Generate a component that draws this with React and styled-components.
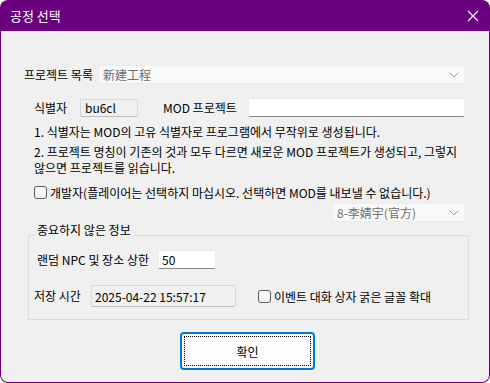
import React from "react";
import styled, { createGlobalStyle } from "styled-components";

const Global = createGlobalStyle`
  html, body { margin: 0; padding: 0; background: #ffffff; }
  body { font-family: "Noto Sans CJK KR", "Noto Sans", sans-serif; font-size: 12px; color: #000; }
  * { box-sizing: border-box; }
`;

const Window = styled.div`
  width: 490px;
  height: 383px;
  background: #6a0080;
  border-radius: 8px;
  display: flex;
  flex-direction: column;
  overflow: hidden;
`;

const TitleBar = styled.div`
  height: 31px;
  flex: 0 0 31px;
  display: flex;
  align-items: center;
  justify-content: space-between;
  padding: 0 10px 0 10px;
  color: #fff;
  font-size: 13px;
`;

const CloseBtn = styled.div`
  width: 12px;
  height: 12px;
  display: flex;
  margin-right: 1px;
`;

const Body = styled.div`
  flex: 1;
  margin: 0 1px 1px 1px;
  background: #f0f0f0;
  border-radius: 0 0 7px 7px;
  display: flex;
  flex-direction: column;
  align-items: flex-start;
`;

const Row = styled.div`
  display: flex;
  align-items: center;
  height: ${(p) => p.$h || 19}px;
  margin-top: ${(p) => p.$top || 0}px;
  padding-left: ${(p) => p.$left || 0}px;
  align-self: ${(p) => (p.$right ? "flex-end" : "auto")};
  padding-right: ${(p) => p.$pr || 0}px;
`;

const Label = styled.span`
  width: ${(p) => (p.$w ? `${p.$w}px` : "auto")};
  margin-left: ${(p) => p.$ml || 0}px;
  white-space: nowrap;
  line-height: 16px;
`;

const Select = styled.div`
  width: ${(p) => p.$w}px;
  height: 19px;
  background: #f9f9f9;
  border: 1px solid #ececec;
  border-radius: 2px;
  display: flex;
  align-items: center;
  justify-content: space-between;
  padding: 0 5px 0 4px;
  color: #6d6d6d;
  font-size: 12px;
`;

const TextBox = styled.div`
  width: ${(p) => p.$w}px;
  height: ${(p) => p.$h || 19}px;
  background: ${(p) => (p.$ro ? "#f0f0f0" : "#ffffff")};
  border: 1px solid ${(p) => (p.$ro ? "#d9d9d9" : "#ececec")};
  border-bottom-color: ${(p) => (p.$ro ? "#bdbdbd" : "#8a8a8a")};
  border-radius: 2px;
  display: flex;
  align-items: center;
  padding-left: ${(p) => p.$pl || 4}px;
  color: #000;
  white-space: nowrap;
`;

const Note = styled.div`
  margin-top: ${(p) => p.$top || 0}px;
  padding-left: 33px;
  line-height: 16px;
  white-space: nowrap;
`;

const CheckRow = styled.label`
  display: flex;
  align-items: center;
  gap: 3px;
  margin-top: ${(p) => p.$top || 0}px;
  margin-left: ${(p) => p.$ml || 0}px;
  padding-left: ${(p) => p.$left || 0}px;
  height: 16px;
  white-space: nowrap;
`;

const Box = styled.span`
  width: 13px;
  height: 13px;
  border: 1px solid #5a5a5a;
  border-radius: 3px;
  background: #f7f7f7;
  flex: 0 0 13px;
`;

const Group = styled.fieldset`
  margin: 0 0 0 27px;
  width: 441px;
  border: 1px solid #dcdcdc;
  padding: 0 0 12px 5px;
  display: flex;
  flex-direction: column;
  align-items: flex-start;
  min-inline-size: 0;
`;

const Legend = styled.legend`
  padding: 0 3px 10px 3px;
  line-height: 16px;
  font-size: 12px;
`;

const Button = styled.button`
  margin: 12px 0 0 179px;
  width: 135px;
  height: 38px;
  background: #fdfdfd;
  border: 2px solid #0078d4;
  border-radius: 4px;
  padding: 2px;
  font: inherit;
  color: #000;
  display: flex;
`;

const Focus = styled.span`
  flex: 1;
  border: 1px dotted #000;
  display: flex;
  align-items: center;
  justify-content: center;
  font-size: 12px;
`;

const Chevron = () => (
  <svg width="10" height="6" viewBox="0 0 10 6">
    <path d="M0.5 0.5 L5 5 L9.5 0.5" fill="none" stroke="#a0a0a0" strokeWidth="1" />
  </svg>
);

export default function App() {
  return (
    <>
      <Global />
      <Window>
        <TitleBar>
          <span>공정 선택</span>
          <CloseBtn>
            <svg width="12" height="12" viewBox="0 0 12 12">
              <path d="M1 1 L11 11 M11 1 L1 11" stroke="#fff" strokeWidth="1.1" />
            </svg>
          </CloseBtn>
        </TitleBar>
        <Body>
          <Row $top={34} $left={23}>
            <Label $w={74}>프로젝트 목록</Label>
            <Select $w={367}>
              <span>新建工程</span>
              <Chevron />
            </Select>
          </Row>
          <Row $top={14} $left={33}>
            <Label $w={46}>식별자</Label>
            <TextBox $w={58} $h={18} $ro>bu6cl</TextBox>
            <Label $ml={25} $w={85}>MOD 프로젝트</Label>
            <TextBox $w={217} />
          </Row>
          <Note $top={7}>1. 식별자는 MOD의 고유 식별자로 프로그램에서 무작위로 생성됩니다.</Note>
          <Note $top={4}>
            2. 프로젝트 명칭이 기존의 것과 모두 다르면 새로운 MOD 프로젝트가 생성되고, 그렇지
            <br />
            않으면 프로젝트를 읽습니다.
          </Note>
          <CheckRow $top={8} $left={33}>
            <Box />
            <span>개발자(플레이어는 선택하지 마십시오. 선택하면 MOD를 내보낼 수 없습니다.)</span>
          </CheckRow>
          <Row $top={3} $right $pr={24}>
            <Select $w={133}>
              <span>8-李婧宇(官方)</span>
              <Chevron />
            </Select>
          </Row>
          <Group>
            <Legend>중요하지 않은 정보</Legend>
            <Row $top={2} $left={3}>
              <Label $w={121}>랜덤 NPC 및 장소 상한</Label>
              <TextBox $w={58} $pl={3}>50</TextBox>
            </Row>
            <Row $top={16} $h={22}>
              <Label $w={57}>저장 시간</Label>
              <TextBox $w={145} $h={22} $ro $pl={3}>2025-04-22 15:57:17</TextBox>
              <CheckRow $ml={22}>
                <Box />
                <span>이벤트 대화 상자 굵은 글꼴 확대</span>
              </CheckRow>
            </Row>
          </Group>
          <Button>
            <Focus>확인</Focus>
          </Button>
        </Body>
      </Window>
    </>
  );
}
